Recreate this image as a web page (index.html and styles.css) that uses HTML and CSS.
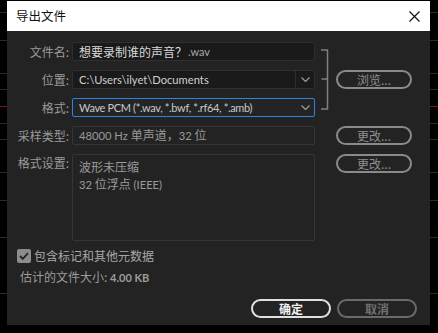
FILE: index.html
```html
<!DOCTYPE html>
<html lang="zh-CN">
<head>
<meta charset="utf-8">
<title>导出文件</title>
<link rel="stylesheet" href="styles.css">
</head>
<body>
<div class="dialog">
  <div class="titlebar">
    <span class="title">导出文件</span>
    <svg class="close" width="11" height="11" viewBox="0 0 11 11"><path d="M0.5 0.5 L10.5 10.5 M10.5 0.5 L0.5 10.5" stroke="#111" stroke-width="1.2" fill="none"/></svg>
  </div>
  <div class="content">
    <div class="form">
      <div class="label r1">文件名:</div>
      <div class="field input r1"><span class="val">想要录制谁的声音？</span><span class="ext">.wav</span></div>

      <div class="label r2">位置:</div>
      <div class="field select r2"><span class="val lat">C:\Users\ilyet\Documents</span><span class="arrow"><svg width="9" height="5" viewBox="0 0 9 5"><path d="M0.5 0.5 L4.5 4.5 L8.5 0.5" stroke="#9a9a9a" stroke-width="1.2" fill="none"/></svg></span></div>

      <div class="label r3">格式:</div>
      <div class="field select focus r3"><span class="val lat tight">Wave PCM (*.wav, *.bwf, *.rf64, *.amb)</span><span class="arrow plain"><svg width="9" height="5" viewBox="0 0 9 5"><path d="M0.5 0.5 L4.5 4.5 L8.5 0.5" stroke="#9a9a9a" stroke-width="1.2" fill="none"/></svg></span></div>

      <svg class="bracket" width="10" height="62" viewBox="0 0 10 62"><path d="M1 1 H7.5 V60 H1 M1.5 30 H7.5" stroke="#808080" stroke-width="1.5" fill="none"/></svg>
      <div class="btn browse">浏览...</div>

      <div class="label r4">采样类型:</div>
      <div class="field disabled r4"><span class="val"><span class="lat">48000 Hz </span>单声道，<span class="lat">32 </span>位</span></div>
      <div class="btn change1">更改...</div>

      <div class="label r5 top">格式设置:</div>
      <div class="field disabled area r5"><span class="val">波形未压缩</span><span class="val"><span class="lat">32 </span>位浮点 <span class="lat">(IEEE)</span></span></div>
      <div class="btn change2">更改...</div>
    </div>

    <div class="check">
      <span class="box"><svg width="10" height="8" viewBox="0 0 10 8"><path d="M1 4 L3.8 6.8 L9 1.2" stroke="#232323" stroke-width="1.8" fill="none"/></svg></span>
      <span class="check-label">包含标记和其他元数据</span>
    </div>
    <div class="size">估计的文件大小: <span class="num">4.00 KB</span></div>

    <div class="actions">
      <div class="btn primary">确定</div>
      <div class="btn cancel">取消</div>
    </div>
  </div>
</div>
</body>
</html>
```

FILE: styles.css
```css
html, body {
  margin: 0;
  padding: 0;
}
body {
  width: 438px;
  height: 333px;
  overflow: hidden;
  background-color: #000;
  background-image:
    linear-gradient(#0c3f0c, #0c3f0c),
    linear-gradient(#0c3f0c, #0c3f0c),
    linear-gradient(#0c3f0c, #0c3f0c),
    linear-gradient(#0c3f0c, #0c3f0c),
    linear-gradient(#8a1010, #8a1010),
    linear-gradient(#0c3f0c, #0c3f0c),
    linear-gradient(#0c3f0c, #0c3f0c),
    linear-gradient(#0c3f0c, #0c3f0c),
    linear-gradient(#0c3f0c, #0c3f0c),
    linear-gradient(#0c3f0c, #0c3f0c),
    linear-gradient(#0c3f0c, #0c3f0c);
  background-repeat: no-repeat;
  background-size: 100% 1px;
  background-position:
    0 12px, 0 40px, 0 73px, 0 89px, 0 106px, 0 123px,
    0 139px, 0 172px, 0 200px, 0 237px, 0 293px;
  font-family: "Noto Sans CJK SC", "Noto Sans", sans-serif;
  font-size: 12px;
}
.dialog {
  margin: 1px 0 0 7px;
  width: 423px;
  height: 324px;
  background: #232323;
  display: flex;
  flex-direction: column;
}
.titlebar {
  height: 30px;
  background: #fff;
  display: flex;
  align-items: center;
  justify-content: space-between;
  padding: 0 10px 0 9px;
  flex: none;
}
.title {
  color: #111;
  font-size: 12.5px;
  line-height: 16px;
}
.content {
  padding: 11px 16px 0 10px;
  display: flex;
  flex-direction: column;
}
.form {
  display: grid;
  grid-template-columns: 52px 243px 12px 79px;
  column-gap: 3px;
  grid-template-rows: 19px 19px 19px 19px 87px;
  row-gap: 9px;
}
.form .btn { margin-left: 3px; }
.label {
  grid-column: 1;
  color: #9a9a9a;
  text-align: right;
  line-height: 19px;
  white-space: nowrap;
}
.label.top { align-self: start; line-height: 18px; }
.r1 { grid-row: 1; }
.r2 { grid-row: 2; }
.r3 { grid-row: 3; }
.r4 { grid-row: 4; }
.r5 { grid-row: 5; }
.field {
  grid-column: 2;
  box-sizing: border-box;
  border: 1px solid #2f2f2f;
  border-radius: 2px;
  background: #1a1a1a;
  display: flex;
  align-items: center;
  padding-left: 6px;
  color: #cfcfcf;
  white-space: nowrap;
  overflow: hidden;
}
.val {
  font-family: "Noto Sans CJK SC", sans-serif;
  font-size: 12px;
  line-height: 16px;
}
.lat {
  font-family: "Lato", "Noto Sans CJK SC", sans-serif;
  font-size: 11.2px;
}
.tight {
  font-size: 11px;
  letter-spacing: -0.35px;
}
.input .val { color: #d8d8d8; }
.ext {
  color: #a8a8a8;
  font-family: "Lato", sans-serif;
  font-size: 11px;
  margin-left: 1px;
}
.select .val { flex: 1; }
.arrow {
  width: 18px;
  align-self: stretch;
  border-left: 1px solid #2f2f2f;
  display: flex;
  align-items: center;
  justify-content: center;
}
.arrow.plain { border-left-color: transparent; }
.focus {
  border-color: #2b84e0;
  background: #242424;
}
.focus .val { color: #c8c8c8; }
.disabled {
  background: #232323;
  border-color: #363636;
}
.disabled .val { color: #9a9a9a; }
.area {
  flex-direction: column;
  align-items: flex-start;
  padding-top: 3px;
}
.area .val { line-height: 17px; }
.bracket {
  grid-column: 3;
  grid-row: 1 / 4;
  align-self: center;
  margin-left: 2px;
}
.btn {
  box-sizing: border-box;
  height: 19px;
  border: 2px solid #8a8a8a;
  border-radius: 10px;
  color: #8e8e8e;
  text-align: center;
  line-height: 15px;
  font-size: 12px;
}
.browse { grid-column: 4; grid-row: 2; }
.change1 { grid-column: 4; grid-row: 4; }
.change2 { grid-column: 4; grid-row: 5; align-self: start; }
.check {
  margin-top: 7px;
  display: flex;
  align-items: center;
  height: 15px;
}
.box {
  width: 14px;
  height: 14px;
  border-radius: 2px;
  background: #8c8c8c;
  display: flex;
  align-items: center;
  justify-content: center;
}
.check-label {
  margin-left: 3px;
  color: #a8a8a8;
}
.size {
  margin: 6px 0 0 3px;
  color: #9c9c9c;
  line-height: 16px;
}
.num {
  font-family: "Lato", sans-serif;
  font-weight: 700;
  font-size: 11px;
}
.actions {
  margin-top: 13px;
  display: flex;
  justify-content: flex-end;
  gap: 6px;
  margin-right: -3px;
}
.actions .btn { width: 80px; }
.primary {
  border-color: #e0e0e0;
  color: #f0f0f0;
  font-weight: 700;
}
.cancel {
  border-color: #6a6a6a;
  color: #707070;
  font-weight: 700;
}
```
